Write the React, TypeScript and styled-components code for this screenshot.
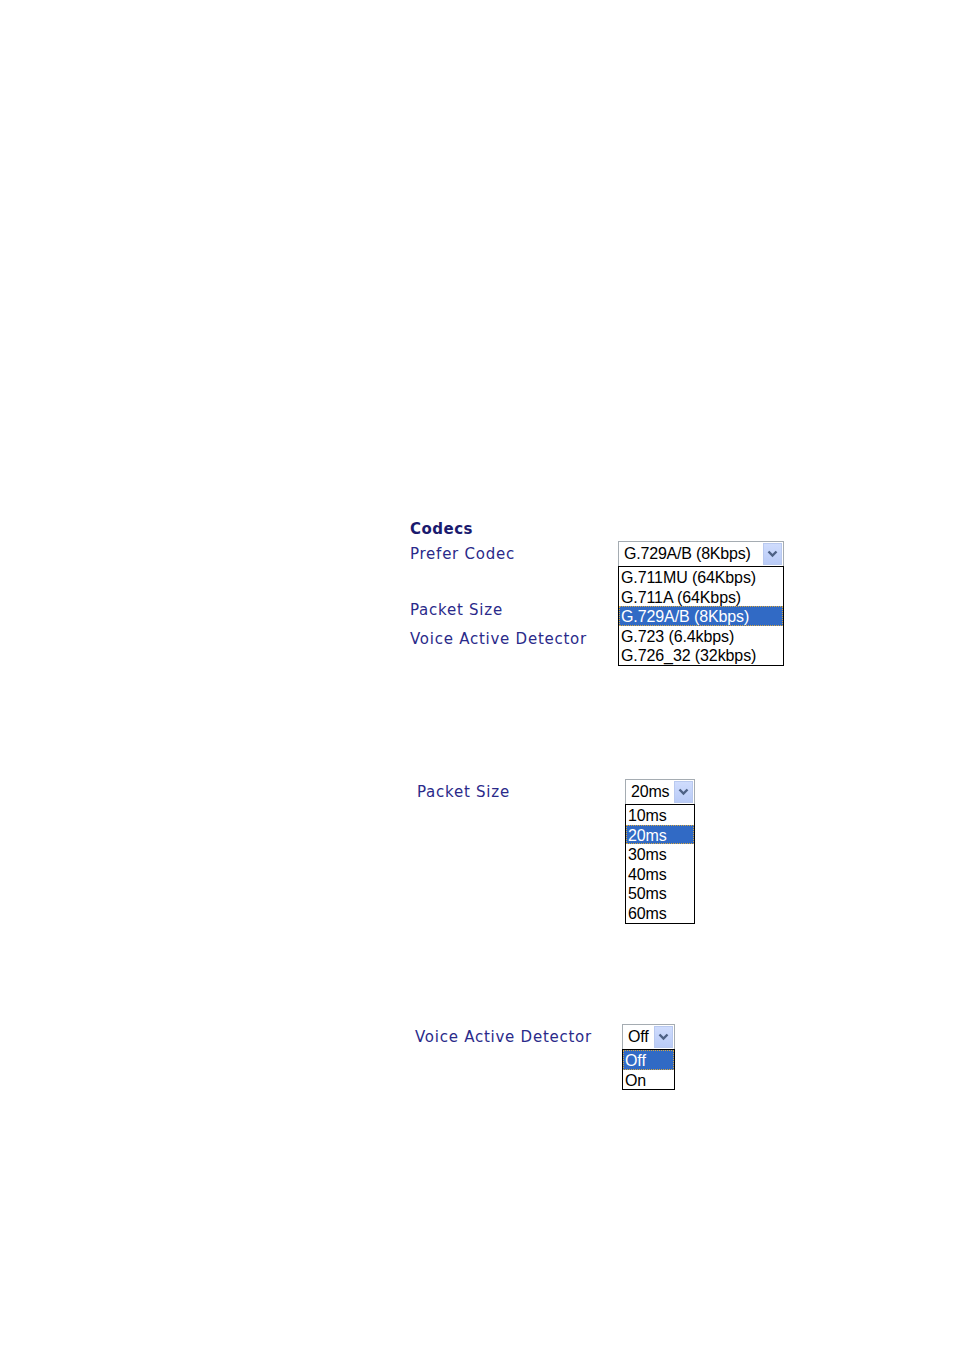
import React from 'react';
import styled, { createGlobalStyle } from 'styled-components';

const GlobalStyle = createGlobalStyle`
  html, body {
    margin: 0;
    padding: 0;
    background: #ffffff;
  }
`;

const CODEC_OPTIONS = [
  'G.711MU (64Kbps)',
  'G.711A (64Kbps)',
  'G.729A/B (8Kbps)',
  'G.723 (6.4kbps)',
  'G.726_32 (32kbps)'
];

const PACKET_OPTIONS = ['10ms', '20ms', '30ms', '40ms', '50ms', '60ms'];

const VAD_OPTIONS = ['Off', 'On'];

function Chevron() {
  return (
    <svg width="11" height="8" viewBox="0 0 11 8">
      <polyline
        points="1.5,1.5 5.5,5.5 9.5,1.5"
        fill="none"
        stroke="#4d6185"
        strokeWidth="2.4"
      />
    </svg>
  );
}

type DropProps = {
  width: number;
  value: string;
  options: string[];
};

function OpenSelect({ width, value, options }: DropProps) {
  return (
    <SelectWrap $width={width}>
      <SelectBox>
        <SelectValue>{value}</SelectValue>
        <ArrowButton>
          <Chevron />
        </ArrowButton>
      </SelectBox>
      <OptionList>
        {options.map((option) => (
          <OptionItem key={option} $selected={option === value}>
            {option}
          </OptionItem>
        ))}
      </OptionList>
    </SelectWrap>
  );
}

function App() {
  return (
    <Page>
      <GlobalStyle />

      <Section $left={410} $top={0}>
        <Title>Codecs</Title>
        <Row $gap={1}>
          <Label>Prefer Codec</Label>
          <OpenSelect width={166} value="G.729A/B (8Kbps)" options={CODEC_OPTIONS} />
        </Row>
        <Row $gap={28}>
          <Label>Packet Size</Label>
        </Row>
        <Row $gap={1}>
          <Label>Voice Active Detector</Label>
        </Row>
      </Section>

      <Section $left={417} $top={125}>
        <Row $gap={0}>
          <Label>Packet Size</Label>
          <OpenSelect width={70} value="20ms" options={PACKET_OPTIONS} />
        </Row>
      </Section>

      <Section $left={415} $top={217}>
        <Row $gap={0}>
          <Label $width={207}>Voice Active Detector</Label>
          <OpenSelect width={53} value="Off" options={VAD_OPTIONS} />
        </Row>
      </Section>
    </Page>
  );
}

const Page = styled.div`
  padding-top: 519px;
  min-height: 1351px;
  box-sizing: border-box;
`;

const Section = styled.section<{ $left: number; $top: number }>`
  padding-left: ${(p) => p.$left}px;
  margin-top: ${(p) => p.$top}px;
`;

const Title = styled.h2`
  margin: 0;
  height: 20px;
  font-family: 'DejaVu Sans', Verdana, sans-serif;
  font-size: 15px;
  line-height: 20px;
  font-weight: 700;
  letter-spacing: 0.5px;
  color: #1a1a6e;
`;

const Row = styled.div<{ $gap: number }>`
  display: flex;
  align-items: center;
  height: 28px;
  margin-top: ${(p) => p.$gap}px;
`;

const Label = styled.div<{ $width?: number }>`
  flex: 0 0 ${(p) => p.$width ?? 208}px;
  font-family: 'DejaVu Sans', Verdana, sans-serif;
  font-size: 15px;
  letter-spacing: 0.75px;
  color: #2a2a8a;
  white-space: nowrap;
`;

const SelectWrap = styled.div<{ $width: number }>`
  position: relative;
  width: ${(p) => p.$width}px;
`;

const SelectBox = styled.div`
  display: flex;
  align-items: center;
  justify-content: space-between;
  box-sizing: border-box;
  height: 26px;
  border: 1px solid #a5acb2;
  padding: 1px 1px 1px 5px;
  background: #ffffff;
`;

const SelectValue = styled.span`
  font-family: 'Liberation Sans', Arial, sans-serif;
  font-size: 16px;
  letter-spacing: -0.2px;
  color: #000000;
  white-space: nowrap;
`;

const ArrowButton = styled.span`
  display: flex;
  align-items: center;
  justify-content: center;
  box-sizing: border-box;
  width: 19px;
  height: 22px;
  border: 1px solid #b9c9ef;
  background: linear-gradient(to bottom, #cfdcfd, #b9cbf7);
`;

const OptionList = styled.ul`
  position: absolute;
  top: 25px;
  left: 0;
  right: 0;
  margin: 0;
  padding: 0;
  list-style: none;
  border: 1px solid #000000;
  background: #ffffff;
  z-index: 2;
`;

const OptionItem = styled.li<{ $selected: boolean }>`
  height: 19.6px;
  line-height: 22px;
  overflow: hidden;
  padding-left: 2px;
  font-family: 'Liberation Sans', Arial, sans-serif;
  font-size: 16px;
  letter-spacing: -0.1px;
  white-space: nowrap;
  color: ${(p) => (p.$selected ? '#ffffff' : '#000000')};
  background: ${(p) => (p.$selected ? '#316ac5' : 'transparent')};
  outline: ${(p) => (p.$selected ? '1px dotted #d8a842' : 'none')};
  outline-offset: -1px;
`;

export default App;
